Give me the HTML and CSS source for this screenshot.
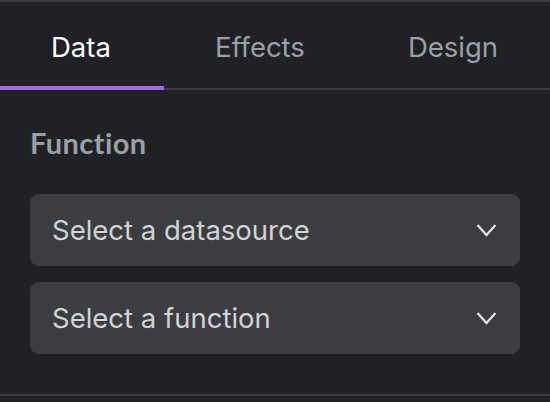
FILE: index.html
```html
<!DOCTYPE html>
<html>
<head>
<meta charset="utf-8">
<link rel="stylesheet" href="styles.css">
</head>
<body>
<div class="panel">
  <div class="tabs">
    <div class="tab active">Data</div>
    <div class="tab">Effects</div>
    <div class="tab">Design</div>
  </div>
  <div class="content">
    <div class="label">Function</div>
    <div class="select">
      <span>Select a datasource</span>
      <svg class="chev" width="21" height="14" viewBox="0 0 21 14"><path d="M1.5 2 L10.5 12 L19.5 2" fill="none" stroke="#e4e5e7" stroke-width="2.2"/></svg>
    </div>
    <div class="select">
      <span>Select a function</span>
      <svg class="chev" width="21" height="14" viewBox="0 0 21 14"><path d="M1.5 2 L10.5 12 L19.5 2" fill="none" stroke="#e4e5e7" stroke-width="2.2"/></svg>
    </div>
  </div>
</div>
</body>
</html>
```

FILE: styles.css
```css
html, body {
  margin: 0;
  padding: 0;
  background: #202124;
}
.panel {
  width: 550px;
  height: 402px;
  background: #202124;
  border-top: 2px solid #3a3b3f;
  box-sizing: border-box;
  font-family: Inter, "Noto Sans", sans-serif;
  display: flex;
  flex-direction: column;
}
.tabs {
  display: flex;
  height: 86px;
  border-bottom: 2px solid #3a3b3f;
}
.tab {
  padding: 0 52px 0 51px;
  font-size: 27.5px;
  line-height: 90px;
  color: #9c9fa4;
  position: relative;
  white-space: nowrap;
}
.tab.active {
  color: #ffffff;
  padding: 0 53px 0 51px;
}
.tab.active::after {
  content: "";
  position: absolute;
  left: 0;
  right: 0;
  bottom: -2px;
  height: 4px;
  background: #a368e6;
}
.content {
  flex: 1;
  padding: 38px 30px 0 30px;
  border-bottom: 2px solid #3a3b3f;
  margin-bottom: 6px;
  display: flex;
  flex-direction: column;
  gap: 16px;
}
.label {
  font-family: Lato, sans-serif;
  font-weight: 700;
  font-size: 29px;
  letter-spacing: 0.4px;
  color: #9c9fa4;
  line-height: 30px;
  margin-bottom: 20px;
}
.select {
  height: 72px;
  background: #3c3d41;
  border-radius: 9px;
  display: flex;
  align-items: center;
  justify-content: space-between;
  padding: 0 23px 0 22px;
  font-size: 27.5px;
  color: #d2d3d6;
}
.chev {
  display: block;
}
```
